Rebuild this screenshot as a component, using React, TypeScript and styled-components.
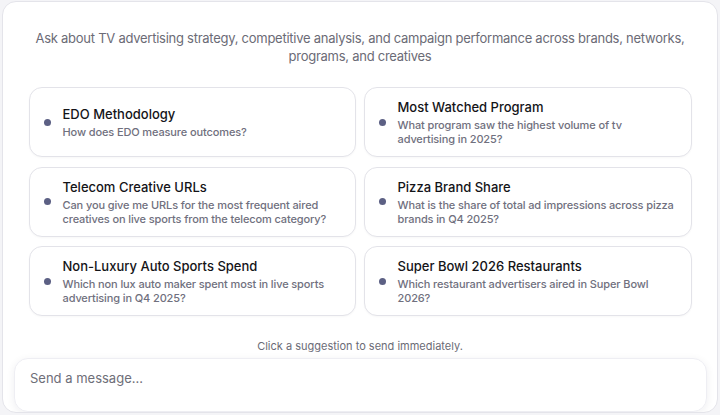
import React from "react";
import styled, { createGlobalStyle } from "styled-components";

const Global = createGlobalStyle`
  html, body { margin: 0; padding: 0; background: #f4f4f7; }
  body { font-family: Inter, "Open Sans", sans-serif; }
  * { box-sizing: border-box; }
`;

const Page = styled.div`
  width: 720px;
  height: 415px;
  padding: 1px 2px 2px 2px;
`;

const Panel = styled.div`
  height: 412px;
  background: #ffffff;
  border: 1px solid #e4e4ea;
  border-radius: 14px;
  overflow: hidden;
  display: flex;
  flex-direction: column;
  align-items: center;
  padding-top: 27px;
`;

const Intro = styled.p`
  margin: 0;
  width: 690px;
  text-align: center;
  font-size: 13px;
  line-height: 18px;
  letter-spacing: -0.26px;
  color: #6b6b76;
`;

const Grid = styled.div`
  margin-top: 22px;
  width: 663px;
  display: grid;
  grid-template-columns: 327px 328px;
  grid-auto-rows: 70px;
  column-gap: 8px;
  row-gap: 9.5px;
`;

const Card = styled.button`
  all: unset;
  cursor: pointer;
  border: 1px solid #e3e3e9;
  border-radius: 13px;
  background: #fff;
  display: flex;
  align-items: center;
  gap: 12px;
  padding: 0 10px 0 14px;
  box-shadow: 0 1px 2px rgba(20, 20, 40, 0.03);
`;

const Dot = styled.span`
  flex: none;
  width: 7px;
  height: 7px;
  border-radius: 50%;
  background: #5c6084;
`;

const CardText = styled.div`
  flex: 1;
  min-width: 0;
  display: flex;
  flex-direction: column;
  gap: 2px;
`;

const Title = styled.div`
  font-size: 13px;
  line-height: 18px;
  font-weight: 500;
  color: #141418;
`;

const Desc = styled.div`
  font-size: 11px;
  line-height: 14px;
  font-weight: 500;
  letter-spacing: -0.12px;
  color: #70707e;
`;

const Caption = styled.div`
  margin-top: 23px;
  font-size: 11px;
  line-height: 14px;
  color: #6b6b76;
`;

const InputBox = styled.div`
  margin-top: 5px;
  align-self: stretch;
  margin-left: 11px;
  margin-right: 10px;
  height: 80px;
  border: 1px solid #eeeef3;
  border-radius: 14px;
  background: #fff;
  box-shadow: 0 2px 8px rgba(30, 30, 60, 0.07);
  padding: 10px 15px;
`;

const Placeholder = styled.div`
  font-size: 13px;
  line-height: 18px;
  color: #6e6e78;
`;

const suggestions = [
  { title: "EDO Methodology", desc: "How does EDO measure outcomes?" },
  {
    title: "Most Watched Program",
    desc: "What program saw the highest volume of tv advertising in 2025?",
  },
  {
    title: "Telecom Creative URLs",
    desc: "Can you give me URLs for the most frequent aired creatives on live sports from the telecom category?",
  },
  {
    title: "Pizza Brand Share",
    desc: "What is the share of total ad impressions across pizza brands in Q4 2025?",
  },
  {
    title: "Non-Luxury Auto Sports Spend",
    desc: "Which non lux auto maker spent most in live sports advertising in Q4 2025?",
  },
  {
    title: "Super Bowl 2026 Restaurants",
    desc: "Which restaurant advertisers aired in Super Bowl 2026?",
  },
];

export default function App() {
  return (
    <>
      <Global />
      <Page>
        <Panel>
          <Intro>
            Ask about TV advertising strategy, competitive analysis, and campaign performance
            across brands, networks, programs, and creatives
          </Intro>
          <Grid>
            {suggestions.map((s) => (
              <Card key={s.title}>
                <Dot />
                <CardText>
                  <Title>{s.title}</Title>
                  <Desc>{s.desc}</Desc>
                </CardText>
              </Card>
            ))}
          </Grid>
          <Caption>Click a suggestion to send immediately.</Caption>
          <InputBox>
            <Placeholder>Send a message...</Placeholder>
          </InputBox>
        </Panel>
      </Page>
    </>
  );
}
